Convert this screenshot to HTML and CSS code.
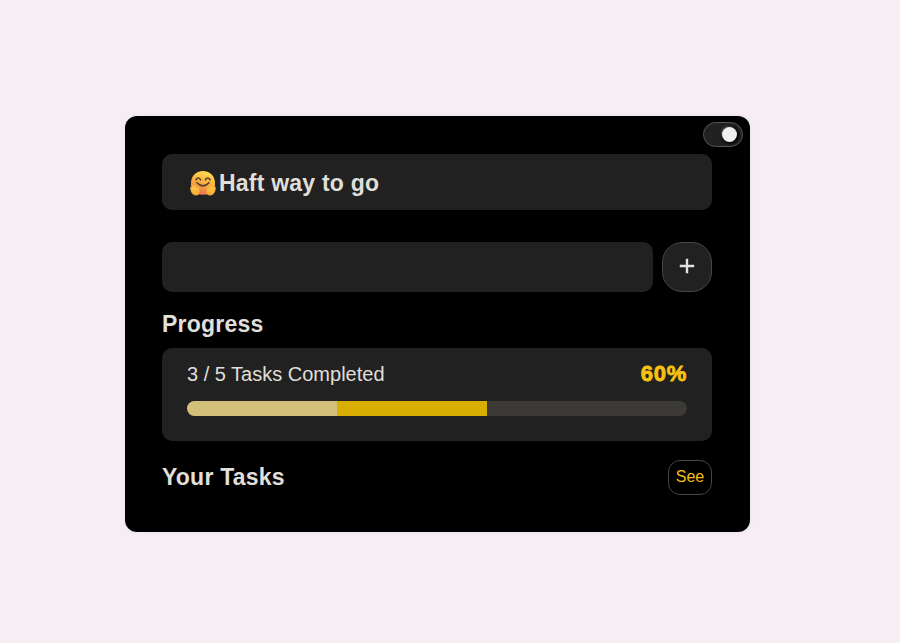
FILE: index.html
```html
<!DOCTYPE html>
<html lang="en">
<head>
<meta charset="utf-8">
<title>Tasks</title>
<link rel="stylesheet" href="styles.css">
</head>
<body>
<main class="card">
  <button class="toggle" aria-label="Theme"><span class="knob"></span></button>
  <header class="banner">
    <svg class="emoji" viewBox="0 0 26 26" aria-hidden="true">
      <defs>
        <linearGradient id="face" x1=".7" y1="0" x2=".35" y2="1"><stop offset="0" stop-color="#ffdc4f"/><stop offset=".5" stop-color="#fbb03f"/><stop offset="1" stop-color="#ec6f52"/></linearGradient>
        <linearGradient id="hand" x1="0" y1="0" x2="0" y2="1"><stop offset="0" stop-color="#ffd24c"/><stop offset="1" stop-color="#f8a632"/></linearGradient>
      </defs>
      <path d="M13 1C20 1 25 6 25 13C25 20 22 24.8 13 24.8C4 24.8 1 20 1 13C1 6 6 1 13 1Z" fill="url(#face)"/>
      <g fill="none" stroke="#563c35" stroke-width="1.6" stroke-linecap="round">
        <path d="M6 9.8Q8.3 6.3 10.6 9.8M15.4 9.8Q17.7 6.3 20 9.8"/>
        <path d="M7 12.7Q13 19 19 12.7"/>
      </g>
      <path id="h" d="M8.2 24.7C5 26 2.3 24.8 1.1 21.5L.2 17.5Q1 16.2 2 18L1.2 14.8Q2.4 13.8 3.5 16.5L4.1 17.5L3.8 14.9Q5.2 14 6 16.5L6.6 18.5L7.4 16.4Q8.8 16 8.8 18L9.2 20.2Q10.4 23 8.2 24.7Z" fill="url(#hand)" stroke="#ed9b3c" stroke-width=".4"/>
      <use href="#h" transform="translate(26 0) scale(-1 1)"/>
    </svg>
    <h1 class="heading">Haft way to go</h1>
  </header>
  <form class="entry">
    <input class="field" type="text" aria-label="New task">
    <button class="add" type="button" aria-label="Add">
      <svg width="16" height="16" viewBox="0 0 16 16"><path d="M8 .8v14.4M.8 8h14.4" stroke="#e4e2dc" stroke-width="2.4"/></svg>
    </button>
  </form>
  <h2 class="heading progress-title">Progress</h2>
  <section class="progress">
    <div class="summary"><span>3 / 5 Tasks Completed</span><span class="percent">60%</span></div>
    <div class="track"><div class="fill"></div></div>
  </section>
  <footer class="tasks">
    <h2 class="heading">Your Tasks</h2>
    <button class="see">See</button>
  </footer>
</main>
</body>
</html>
```
FILE: styles.css
```css
* { box-sizing: border-box; }

body {
  margin: 0;
  height: 643px;
  padding: 116px 0 0 125px;
  background: #f7edf5;
  font-family: "Liberation Sans", Arial, sans-serif;
  color: #e0dfda;
}

button { padding: 0; font-family: inherit; }

.card {
  position: relative;
  width: 625px;
  height: 416px;
  padding: 38px 38px 0 37px;
  border-radius: 12px;
  background: #000;
  box-shadow: 0 0 5px rgba(0, 0, 0, .06);
}

.toggle {
  position: absolute;
  top: 6px;
  right: 7px;
  width: 40px;
  height: 25px;
  display: flex;
  align-items: center;
  justify-content: flex-end;
  padding-right: 5px;
  border: 1px solid #555;
  border-radius: 13px;
  background: #212121;
}

.knob {
  width: 15px;
  height: 15px;
  margin-top: -1px;
  border-radius: 50%;
  background: #f0f0f0;
  box-shadow: 1px 1px 3px 1px #000, -1px -1px 1px #555;
}

.heading {
  margin: 0;
  font-size: 23px;
  line-height: 26px;
  font-weight: 700;
  letter-spacing: .22px;
}

.banner {
  height: 56px;
  display: flex;
  align-items: center;
  gap: 3px;
  padding: 2px 28px 0;
  border-radius: 10px;
  background: #212121;
}

.emoji { width: 26px; height: 26px; }

.entry {
  display: flex;
  gap: 9px;
  margin: 32px 0 0;
}

.field {
  width: 491px;
  height: 50px;
  border: 0;
  border-radius: 10px;
  background: #212121;
}

.add {
  width: 50px;
  height: 50px;
  display: grid;
  place-items: center;
  padding-bottom: 2px;
  border: 1px solid #454545;
  border-radius: 20px;
  background: #212121;
}

.progress-title { margin-top: 19px; }

.progress {
  height: 93px;
  margin-top: 11px;
  padding: 13px 25px 0;
  border-radius: 10px;
  background: #212121;
}

.summary {
  display: flex;
  justify-content: space-between;
  font-size: 20px;
  line-height: 26px;
}

.percent {
  height: 26px;
  font-size: 22px;
  font-weight: 900;
  letter-spacing: .7px;
  color: #f7c212;
  -webkit-text-stroke: .8px #f7c212;
}

.track {
  height: 15px;
  margin-top: 14px;
  border-radius: 8px;
  overflow: hidden;
  background: #3b3a37;
}

.fill {
  width: 60%;
  height: 100%;
  background: linear-gradient(90deg, #d2c07b 50%, #d8ae02 50%);
}

.tasks {
  display: flex;
  align-items: center;
  justify-content: space-between;
  margin-top: 19px;
}

.tasks .heading { padding-bottom: 2px; }

.see {
  width: 44px;
  height: 35px;
  padding-bottom: 2px;
  border: 1px solid #454545;
  border-radius: 12px;
  background: #000;
  color: #f4bf12;
  font-size: 16px;
}
```
